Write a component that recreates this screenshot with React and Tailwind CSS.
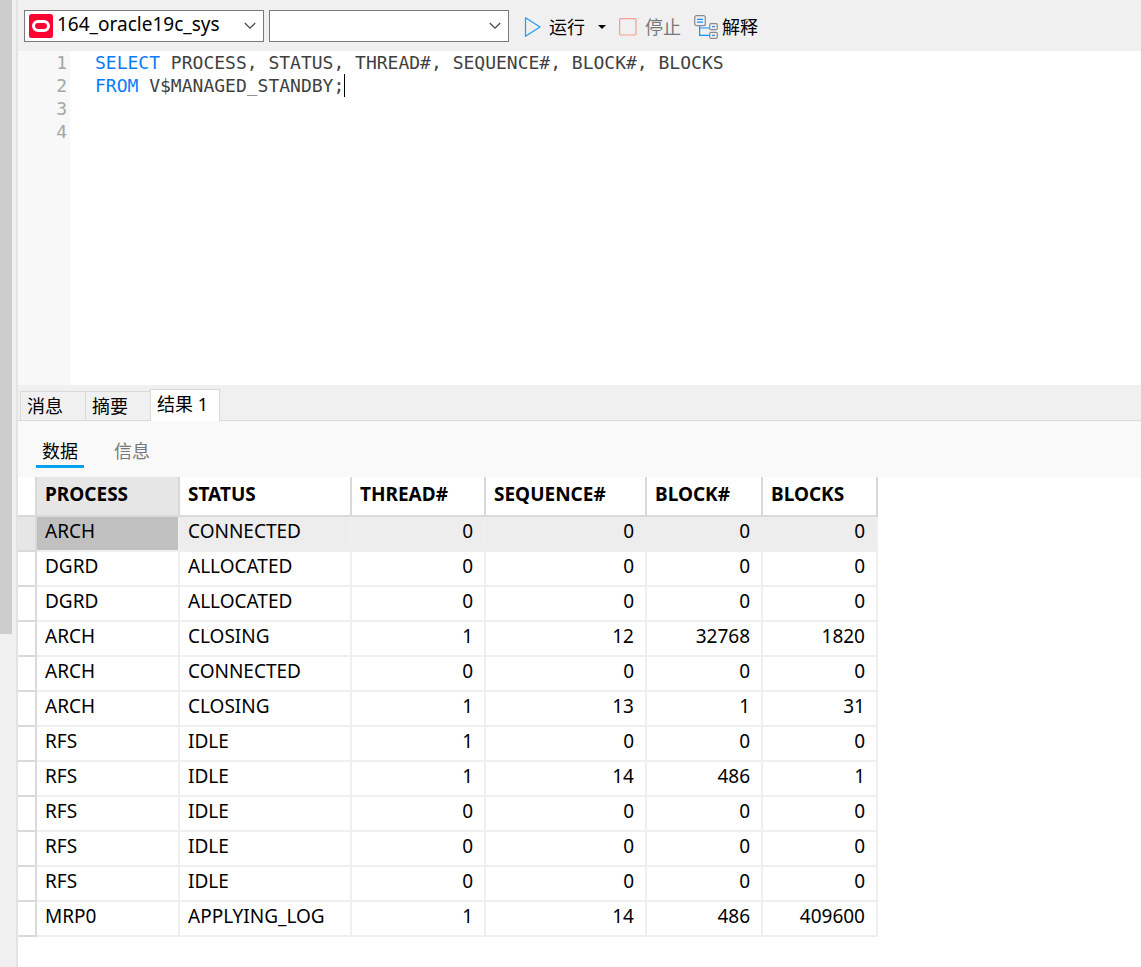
import { useState } from 'react'
import clsx from 'clsx'

const columns = [
  { name: 'PROCESS', width: 'w-[143px]' },
  { name: 'STATUS', width: 'w-[172px]' },
  { name: 'THREAD#', width: 'w-[134px]', numeric: true },
  { name: 'SEQUENCE#', width: 'w-[161px]', numeric: true },
  { name: 'BLOCK#', width: 'w-[116px]', numeric: true },
  { name: 'BLOCKS', width: 'w-[115px]', numeric: true },
]

const rows = [
  ['ARCH', 'CONNECTED', 0, 0, 0, 0],
  ['DGRD', 'ALLOCATED', 0, 0, 0, 0],
  ['DGRD', 'ALLOCATED', 0, 0, 0, 0],
  ['ARCH', 'CLOSING', 1, 12, 32768, 1820],
  ['ARCH', 'CONNECTED', 0, 0, 0, 0],
  ['ARCH', 'CLOSING', 1, 13, 1, 31],
  ['RFS', 'IDLE', 1, 0, 0, 0],
  ['RFS', 'IDLE', 1, 14, 486, 1],
  ['RFS', 'IDLE', 0, 0, 0, 0],
  ['RFS', 'IDLE', 0, 0, 0, 0],
  ['RFS', 'IDLE', 0, 0, 0, 0],
  ['MRP0', 'APPLYING_LOG', 1, 14, 486, 409600],
]

const initialSql = [
  'SELECT PROCESS, STATUS, THREAD#, SEQUENCE#, BLOCK#, BLOCKS',
  'FROM V$MANAGED_STANDBY;',
  '',
  '',
].join('\n')

function Dropdown({ label, options, children }) {
  return (
    <div className="relative flex h-8 w-60 items-center border border-[#7a7a7a] bg-white">
      {children}
      <select
        aria-label={label}
        className={clsx(
          'h-full w-full appearance-none bg-transparent pr-8 pb-1 text-[19px] leading-6 outline-none',
          children ? 'pl-1' : 'pl-2'
        )}
      >
        {options.map((o) => (
          <option key={o}>{o}</option>
        ))}
      </select>
      <svg className="pointer-events-none absolute right-[7px] h-3 w-3" viewBox="0 0 12 12" fill="none" stroke="#444">
        <path d="M.8 3 6 8.2 11.2 3" strokeWidth="1.2" />
      </svg>
    </div>
  )
}

function Toolbar() {
  return (
    <div className="flex h-[51px] items-center gap-[5px] bg-[#f0f0f0] pl-[6px]">
      <Dropdown label="连接" options={['164_oracle19c_sys']}>
        <svg className="ml-1 h-6 w-6 shrink-0" viewBox="0 0 24 24">
          <rect width="24" height="24" rx="2.5" fill="#ff0032" />
          <rect x="4.5" y="7.5" width="15" height="9" rx="4.5" fill="none" stroke="#fff" strokeWidth="3" />
        </svg>
      </Dropdown>
      <Dropdown label="模式" options={['']} />

      <div className="flex items-center gap-[13px] pt-[2px] pl-[10px] text-lg leading-6">
        <button className="flex items-center gap-2">
          <svg className="h-5 w-[17px]" viewBox="0 0 17 20" fill="none" stroke="#1e9bf5" strokeWidth="1.2" strokeLinejoin="round">
            <path d="M1.5.8v18.4L16 10z" />
          </svg>
          运行
        </button>
        <button aria-label="运行选项" className="flex h-6 w-2 items-center">
          <svg className="h-1 w-2" viewBox="0 0 8 4">
            <path d="M0 0h8L4 4z" fill="#000" />
          </svg>
        </button>
        <button disabled className="flex items-center gap-2 text-[#787878]">
          <svg className="h-[18px] w-[18px]" viewBox="0 0 18 18" fill="none" stroke="#f99b92" strokeWidth="1.2">
            <rect x=".6" y=".6" width="16.4" height="16.4" rx="1.2" />
          </svg>
          停止
        </button>
        <button className="flex items-center gap-1">
          <svg className="h-6 w-6" viewBox="0 0 24 24" fill="none" strokeWidth="1.2">
            <g stroke="#8a8a8a">
              <rect x=".7" y=".7" width="10.6" height="10" rx="2" />
              <rect x="15.7" y="8.7" width="7.6" height="6" rx="1.2" />
              <rect x="15.7" y="17.3" width="7.6" height="6" rx="1.2" />
            </g>
            <path stroke="#1490ff" d="M3 4.4h6M3 7.2h6M5.6 11v9.3h10M5.6 13h10M18 11.7h3M18 20.3h3" />
          </svg>
          解释
        </button>
      </div>
    </div>
  )
}

function Editor() {
  const [sql, setSql] = useState(initialSql)
  const lines = sql.split('\n')

  return (
    <div className="flex h-[334px] bg-white font-['DejaVu_Sans_Mono','Noto_Sans_CJK_SC',monospace] text-lg leading-[23px]">
      <div className="w-[52px] bg-[#f8f8f8] pr-[3px] text-right text-[#a5a5a5]">
        {lines.map((_, i) => (
          <div key={i}>{i + 1}</div>
        ))}
      </div>
      <div className="relative flex-1 pl-[25px] text-[#3f3f3f]">
        {/* highlighted copy, the textarea on top takes the input */}
        <pre aria-hidden="true" className="font-[inherit]">
          {lines.map((line, i) => (
            <div key={i} className="flex h-[23px]">
              <span>
                {line.split(/\b(SELECT|FROM)\b/).map((part, j) => (
                  <span key={j} className={j % 2 ? 'text-[#0a7cff]' : undefined}>{part}</span>
                ))}
              </span>
              {i === 1 && <span className="h-[23px] w-px bg-black" />}
            </div>
          ))}
        </pre>
        <textarea
          aria-label="SQL"
          spellCheck={false}
          wrap="off"
          value={sql}
          onChange={(e) => setSql(e.target.value)}
          className="absolute inset-0 resize-none bg-transparent pl-[25px] text-transparent caret-black outline-none"
        />
      </div>
    </div>
  )
}

function ResultTabs() {
  const [active, setActive] = useState('结果 1')
  return (
    <div className="flex h-9 items-end bg-[#f0f0f0] text-lg leading-6">
      <div className="h-px w-[2px] bg-[#d9d9d9]" />
      {['消息', '摘要', '结果 1'].map((tab) => (
        <button
          key={tab}
          onClick={() => setActive(tab)}
          className={clsx(
            'border-[#d9d9d9] text-left',
            tab === active
              ? 'h-8 w-[70px] border-x border-t bg-white pb-1 pl-[6px]'
              : 'h-[30px] w-[65px] border-y border-l pl-[6px]'
          )}
        >
          {tab}
        </button>
      ))}
      <div className="h-px flex-1 bg-[#d9d9d9]" />
    </div>
  )
}

function ViewTabs() {
  const [active, setActive] = useState('数据')
  return (
    <div className="flex h-14 gap-6 bg-[#f9f9f9] pt-4 pl-[18px] text-lg leading-7">
      {['数据', '信息'].map((tab) => (
        <button
          key={tab}
          onClick={() => setActive(tab)}
          className={clsx(
            'h-[31px] w-12 border-b-3',
            tab === active ? 'border-[#00a2ed]' : 'border-transparent text-[#787878]'
          )}
        >
          {tab}
        </button>
      ))}
    </div>
  )
}

function ResultGrid() {
  return (
    <table className="w-[860px] table-fixed border-separate border-spacing-0 text-[19px] leading-6">
      <thead>
        <tr className="h-10 text-left">
          <td className="w-[19px] border-r-2 border-b-2 border-[#d9d9d9]" />
          {columns.map((c, i) => (
            <th
              key={c.name}
              scope="col"
              className={clsx('border-r-2 border-b-2 border-[#d9d9d9] pb-1 pl-2', c.width, i === 0 && 'bg-[#e6e6e6]')}
            >
              {c.name}
            </th>
          ))}
        </tr>
      </thead>
      <tbody>
        {rows.map((row, r) => (
          <tr key={r} className={clsx('h-[35px]', r === 0 && 'bg-[#ededed]')}>
            <td className={clsx('border-r-2 border-b-2 border-[#d9d9d9]', r === 0 && 'bg-[#e6e6e6]')} />
            {row.map((value, i) => (
              <td
                key={i}
                className={clsx(
                  'border-r-2 border-b-2 border-[#efefef] pb-[6px]',
                  columns[i].numeric ? 'pr-[11px] text-right' : 'pl-2',
                  r === 0 && i === 0 && 'bg-[#c0c0c0] bg-clip-padding'
                )}
              >
                {value}
              </td>
            ))}
          </tr>
        ))}
      </tbody>
    </table>
  )
}

export default function App() {
  return (
    <div className="flex min-h-screen bg-white font-['Noto_Sans','Noto_Sans_CJK_SC',sans-serif] text-black">
      {/* scrollbar of the object list next to the query window */}
      <div className="w-[18px] shrink-0 border-r-2 border-[#e3e3e3] bg-[#f0f0f0]">
        <div className="h-[634px] w-3 bg-[#cdcdcd]" />
      </div>
      <main className="min-w-0 flex-1">
        <Toolbar />
        <Editor />
        <ResultTabs />
        <ViewTabs />
        <ResultGrid />
      </main>
    </div>
  )
}
